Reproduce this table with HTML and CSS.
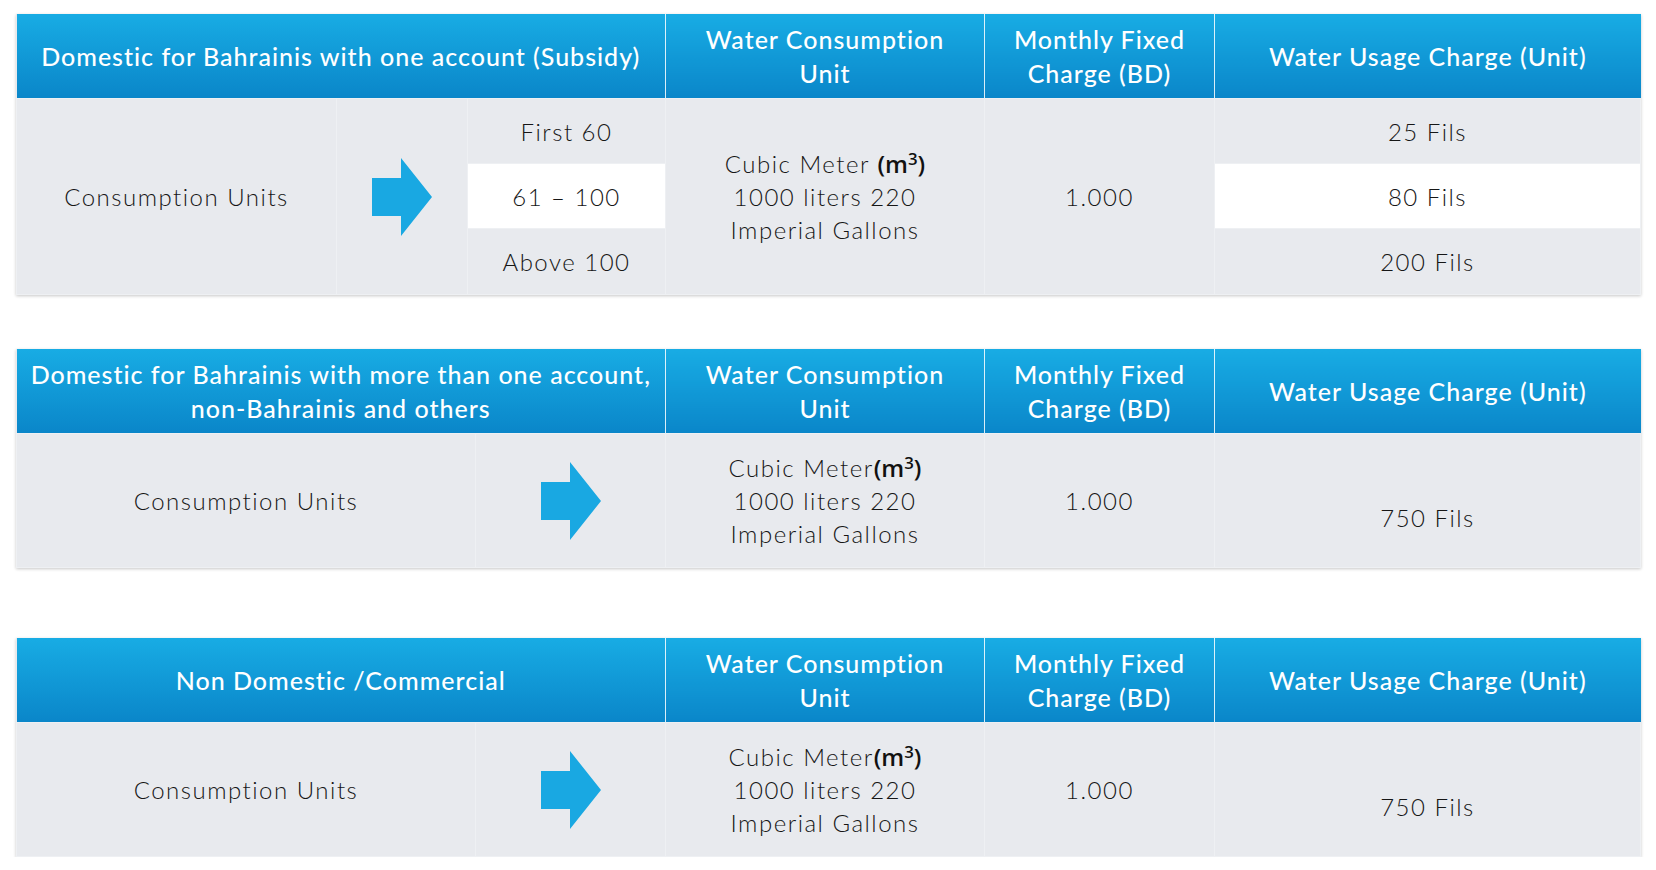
FILE: index.html
```html
<!DOCTYPE html>
<html lang="en">
<head>
<meta charset="utf-8">
<title>Water Tariffs</title>
<link rel="stylesheet" href="styles.css">
</head>
<body>
<div class="page">

  <table class="rate-table">
    <colgroup>
      <col class="c-label1"><col class="c-arrow1"><col class="c-range">
      <col class="c-unit"><col class="c-fixed"><col class="c-charge">
    </colgroup>
    <thead>
      <tr>
        <th colspan="3">Domestic for Bahrainis with one account (Subsidy)</th>
        <th>Water Consumption<br>Unit</th>
        <th>Monthly Fixed<br>Charge (BD)</th>
        <th>Water Usage Charge (Unit)</th>
      </tr>
    </thead>
    <tbody>
      <tr class="r1">
        <td rowspan="3">Consumption Units</td>
        <td rowspan="3"><svg class="arrow" viewBox="0 0 60 78" width="60" height="78"><polygon points="0,20 29,20 29,0 60,39 29,78 29,58 0,58"/></svg></td>
        <td>First 60</td>
        <td rowspan="3">Cubic Meter <span class="m3">(m<sup>3</sup>)</span><br>1000 liters 220<br>Imperial Gallons</td>
        <td rowspan="3">1.000</td>
        <td>25 Fils</td>
      </tr>
      <tr class="r2">
        <td class="hl">61 – 100</td>
        <td class="hl">80 Fils</td>
      </tr>
      <tr class="r3">
        <td>Above 100</td>
        <td>200 Fils</td>
      </tr>
    </tbody>
  </table>

  <table class="rate-table t2">
    <colgroup>
      <col class="c-label2"><col class="c-arrow2">
      <col class="c-unit"><col class="c-fixed"><col class="c-charge">
    </colgroup>
    <thead>
      <tr>
        <th colspan="2">Domestic for Bahrainis with more than one account,<br>non-Bahrainis and others</th>
        <th>Water Consumption<br>Unit</th>
        <th>Monthly Fixed<br>Charge (BD)</th>
        <th>Water Usage Charge (Unit)</th>
      </tr>
    </thead>
    <tbody>
      <tr class="rs">
        <td>Consumption Units</td>
        <td><svg class="arrow" viewBox="0 0 60 78" width="60" height="78"><polygon points="0,20 29,20 29,0 60,39 29,78 29,58 0,58"/></svg></td>
        <td>Cubic Meter<span class="m3">(m<sup>3</sup>)</span><br>1000 liters 220<br>Imperial Gallons</td>
        <td>1.000</td>
        <td><div class="low">750 Fils</div></td>
      </tr>
    </tbody>
  </table>

  <table class="rate-table t3">
    <colgroup>
      <col class="c-label2"><col class="c-arrow2">
      <col class="c-unit"><col class="c-fixed"><col class="c-charge">
    </colgroup>
    <thead>
      <tr>
        <th colspan="2">Non Domestic /Commercial</th>
        <th>Water Consumption<br>Unit</th>
        <th>Monthly Fixed<br>Charge (BD)</th>
        <th>Water Usage Charge (Unit)</th>
      </tr>
    </thead>
    <tbody>
      <tr class="rs">
        <td>Consumption Units</td>
        <td><svg class="arrow" viewBox="0 0 60 78" width="60" height="78"><polygon points="0,20 29,20 29,0 60,39 29,78 29,58 0,58"/></svg></td>
        <td>Cubic Meter<span class="m3">(m<sup>3</sup>)</span><br>1000 liters 220<br>Imperial Gallons</td>
        <td>1.000</td>
        <td><div class="low">750 Fils</div></td>
      </tr>
    </tbody>
  </table>

</div>
</body>
</html>
```

FILE: styles.css
```css
html, body {
  margin: 0;
  padding: 0;
  background: #ffffff;
}

body {
  font-family: "Lato", "Liberation Sans", sans-serif;
  color: #161616;
}

.page {
  padding: 14px 0 0 16px;
}

.rate-table {
  width: 1624px;
  table-layout: fixed;
  border-collapse: collapse;
  background: #e8eaee;
  box-shadow: 0 1px 3px rgba(0, 0, 0, 0.22);
}

.t2 { margin-top: 54px; }
.t3 { margin-top: 70px; }

.c-label1 { width: 320px; }
.c-arrow1 { width: 131px; }
.c-range  { width: 198px; }
.c-unit   { width: 319px; }
.c-fixed  { width: 230px; }
.c-charge { width: 426px; }
.c-label2 { width: 459px; }
.c-arrow2 { width: 190px; }

.rate-table th {
  height: 84px;
  padding: 0 6px;
  background: linear-gradient(to bottom, #18ace4 0%, #0a86c9 100%);
  color: #ffffff;
  font-weight: 500;
  font-size: 25px;
  line-height: 34px;
  letter-spacing: 1px;
  text-align: center;
  vertical-align: middle;
  border-left: 1px solid rgba(255, 255, 255, 0.85);
}

.rate-table th:first-child {
  border-left: none;
}

.rate-table td {
  padding: 0;
  font-weight: 300;
  font-size: 24px;
  line-height: 33px;
  letter-spacing: 1.5px;
  text-align: center;
  vertical-align: middle;
  border: 1px solid #eef0f3;
}

.r1 td { height: 64px; }
.r2 td { height: 64px; }
.r3 td { height: 65px; }
.rs td { height: 133px; }

.rate-table td.hl {
  background: #ffffff;
}

.arrow {
  display: block;
  margin: 0 auto;
  fill: #19a8e2;
}

.m3 {
  font-family: "Open Sans", "Liberation Sans", sans-serif;
  font-weight: 600;
  color: #111111;
  letter-spacing: 0;
}

.m3 sup {
  font-size: 0.7em;
  line-height: 0;
  vertical-align: 0.5em;
}

.low {
  padding-top: 34px;
}
```
